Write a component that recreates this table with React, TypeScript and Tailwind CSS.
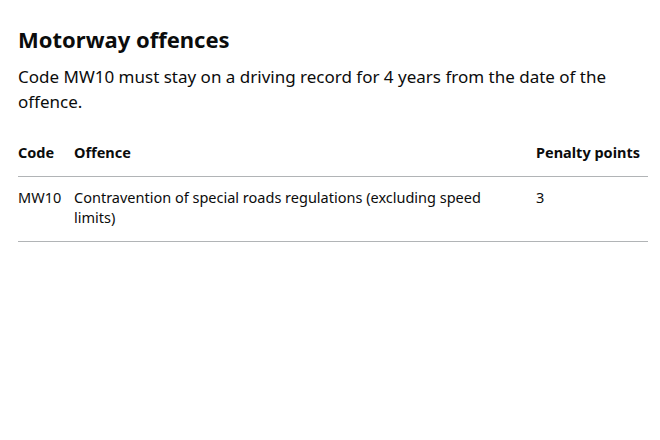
export default function App() {
  return (
    <div className="min-h-[440px] bg-white text-[#0b0c0c] px-[18px] pt-[24px]" style={{ fontFamily: '"Noto Sans", Arial, sans-serif' }}>
      <h2 className="text-[22px] leading-[30px] font-bold mb-[10px]">Motorway offences</h2>
      <p className="text-[17px] leading-[25px] mb-[15px]">
        Code MW10 must stay on a driving record for 4 years from the date of the offence.
      </p>
      <table className="w-[630px] table-fixed border-collapse text-[14.5px] leading-[20px]">
        <colgroup>
          <col className="w-[56px]" />
          <col className="w-[462px]" />
          <col className="w-[112px]" />
        </colgroup>
        <thead>
          <tr className="border-b border-[#b1b4b6]">
            <th className="text-left font-bold pt-[13px] pb-[14px] pr-[10px] align-top">Code</th>
            <th className="text-left font-bold pt-[13px] pb-[14px] pr-[20px] align-top">Offence</th>
            <th className="text-left font-bold pt-[13px] pb-[14px] align-top">Penalty points</th>
          </tr>
        </thead>
        <tbody>
          <tr className="border-b border-[#b1b4b6]">
            <td className="pt-[10px] pb-[14px] pr-[10px] align-top">MW10</td>
            <td className="pt-[10px] pb-[14px] pr-[40px] align-top">Contravention of special roads regulations (excluding speed limits)</td>
            <td className="pt-[10px] pb-[14px] align-top">3</td>
          </tr>
        </tbody>
      </table>
    </div>
  )
}
